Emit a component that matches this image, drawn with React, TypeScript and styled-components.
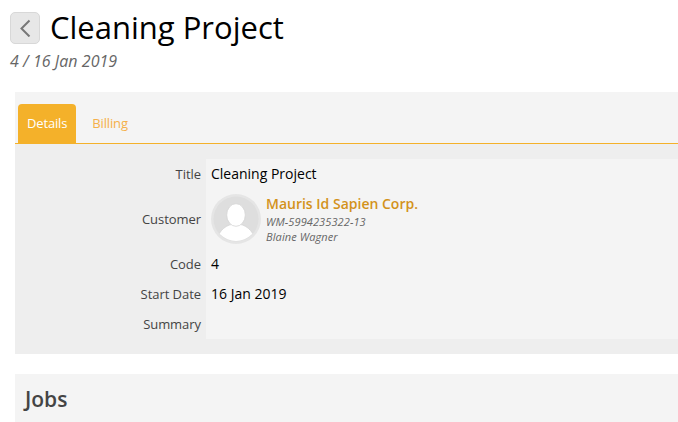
import React from 'react';
import styled, { createGlobalStyle } from 'styled-components';

const GlobalStyle = createGlobalStyle`
  * { box-sizing: border-box; }
  body {
    margin: 0;
    background: #fff;
    font-family: "Open Sans", "Noto Sans", sans-serif;
    font-size: 14px;
    color: #000;
    overflow: hidden;
  }
`;

const Page = styled.main`
  height: 422px;
  overflow: hidden;
`;

const Header = styled.header`
  height: 92px;
  padding: 8px 0 0 10px;
`;

const TitleRow = styled.div`
  display: flex;
  align-items: center;
  gap: 10px;
  height: 40px;
`;

const BackButton = styled.button`
  display: flex;
  align-items: center;
  justify-content: center;
  width: 30px;
  height: 32px;
  padding: 0;
  border: 1px solid #d8d8d8;
  border-radius: 5px;
  background: #e7e7e7;
`;

const PageTitle = styled.h1`
  margin: 0;
  padding-bottom: 2px;
  font-size: 31px;
  line-height: 38px;
  font-weight: 400;
  white-space: nowrap;
`;

const Subtitle = styled.div`
  padding-top: 2px;
  font-size: 16px;
  line-height: 22px;
  font-style: italic;
  letter-spacing: 0.05px;
  color: #666;
`;

const Panel = styled.section`
  margin-left: 15px;
  height: 262px;
  background: #eee;
`;

const Tabs = styled.nav`
  display: flex;
  align-items: flex-end;
  gap: 7px;
  height: 52px;
  padding-left: 3px;
  background: #f4f4f4;
  border-bottom: 1px solid #f4b12a;
`;

const Tab = styled.a<{ $active?: boolean }>`
  height: 39px;
  padding: 0 9px;
  border-radius: 4px 4px 0 0;
  background: ${(p) => (p.$active ? '#f4b12a' : 'transparent')};
  color: ${(p) => (p.$active ? '#fff' : '#f4b04a')};
  font-size: 13px;
  line-height: 39px;
  letter-spacing: -0.15px;
`;

const Details = styled.dl`
  display: grid;
  grid-template-columns: 191px 1fr;
  grid-template-rows: 30px 60px 30px 30px 30px;
  margin: 15px 0 0;
`;

const Label = styled.dt`
  display: flex;
  align-items: center;
  justify-content: flex-end;
  padding-right: 5px;
  font-size: 13px;
  letter-spacing: -0.05px;
  color: #444;
`;

const Value = styled.dd`
  display: flex;
  align-items: center;
  gap: 5px;
  margin: 0;
  padding-left: 5px;
  line-height: 18px;
  background: #f4f4f4;
`;

const CustomerText = styled.div`
  font-size: 11px;
  line-height: 15px;
  font-style: italic;
  letter-spacing: 0.1px;
  color: #666;
`;

const CustomerName = styled.div`
  font-size: 14px;
  line-height: 20px;
  font-style: normal;
  font-weight: 600;
  letter-spacing: 0;
  color: #d3921b;
`;

const Jobs = styled.section`
  margin: 20px 0 0 15px;
  height: 48px;
  padding-left: 10px;
  background: #f4f4f4;
`;

const JobsTitle = styled.h2`
  margin: 0;
  font-size: 21px;
  line-height: 50px;
  font-weight: 600;
  color: #444;
`;

const Avatar = () => (
  <svg width="50" height="50" viewBox="0 0 50 50">
    <defs>
      <clipPath id="face"><circle cx="25" cy="25" r="22" /></clipPath>
    </defs>
    <circle cx="25" cy="25" r="25" fill="#e5e5e5" />
    <circle cx="25" cy="25" r="22.5" fill="#dedede" />
    <g clipPath="url(#face)" fill="#fff" stroke="#d4d4d4" strokeWidth="0.8">
      <path d="M5 46C9 36 15 30 25 30s16 6 20 16v6H5z" />
      <ellipse cx="25" cy="21" rx="9.3" ry="11.3" />
    </g>
  </svg>
);

export default function App() {
  return (
    <Page>
      <GlobalStyle />
      <Header>
        <TitleRow>
          <BackButton aria-label="Back">
            <svg width="12" height="18" viewBox="0 0 12 18" fill="none" stroke="#777" strokeWidth="2">
              <path d="M10.5 1.5l-8 8 8 8" />
            </svg>
          </BackButton>
          <PageTitle>Cleaning Project</PageTitle>
        </TitleRow>
        <Subtitle>4 / 16 Jan 2019</Subtitle>
      </Header>
      <Panel>
        <Tabs>
          <Tab $active>Details</Tab>
          <Tab>Billing</Tab>
        </Tabs>
        <Details>
          <Label>Title</Label>
          <Value>Cleaning Project</Value>
          <Label>Customer</Label>
          <Value>
            <Avatar />
            <CustomerText>
              <CustomerName>Mauris Id Sapien Corp.</CustomerName>
              <div>WM-5994235322-13</div>
              <div>Blaine Wagner</div>
            </CustomerText>
          </Value>
          <Label>Code</Label>
          <Value>4</Value>
          <Label>Start Date</Label>
          <Value>16 Jan 2019</Value>
          <Label>Summary</Label>
          <Value />
        </Details>
      </Panel>
      <Jobs>
        <JobsTitle>Jobs</JobsTitle>
      </Jobs>
    </Page>
  );
}
